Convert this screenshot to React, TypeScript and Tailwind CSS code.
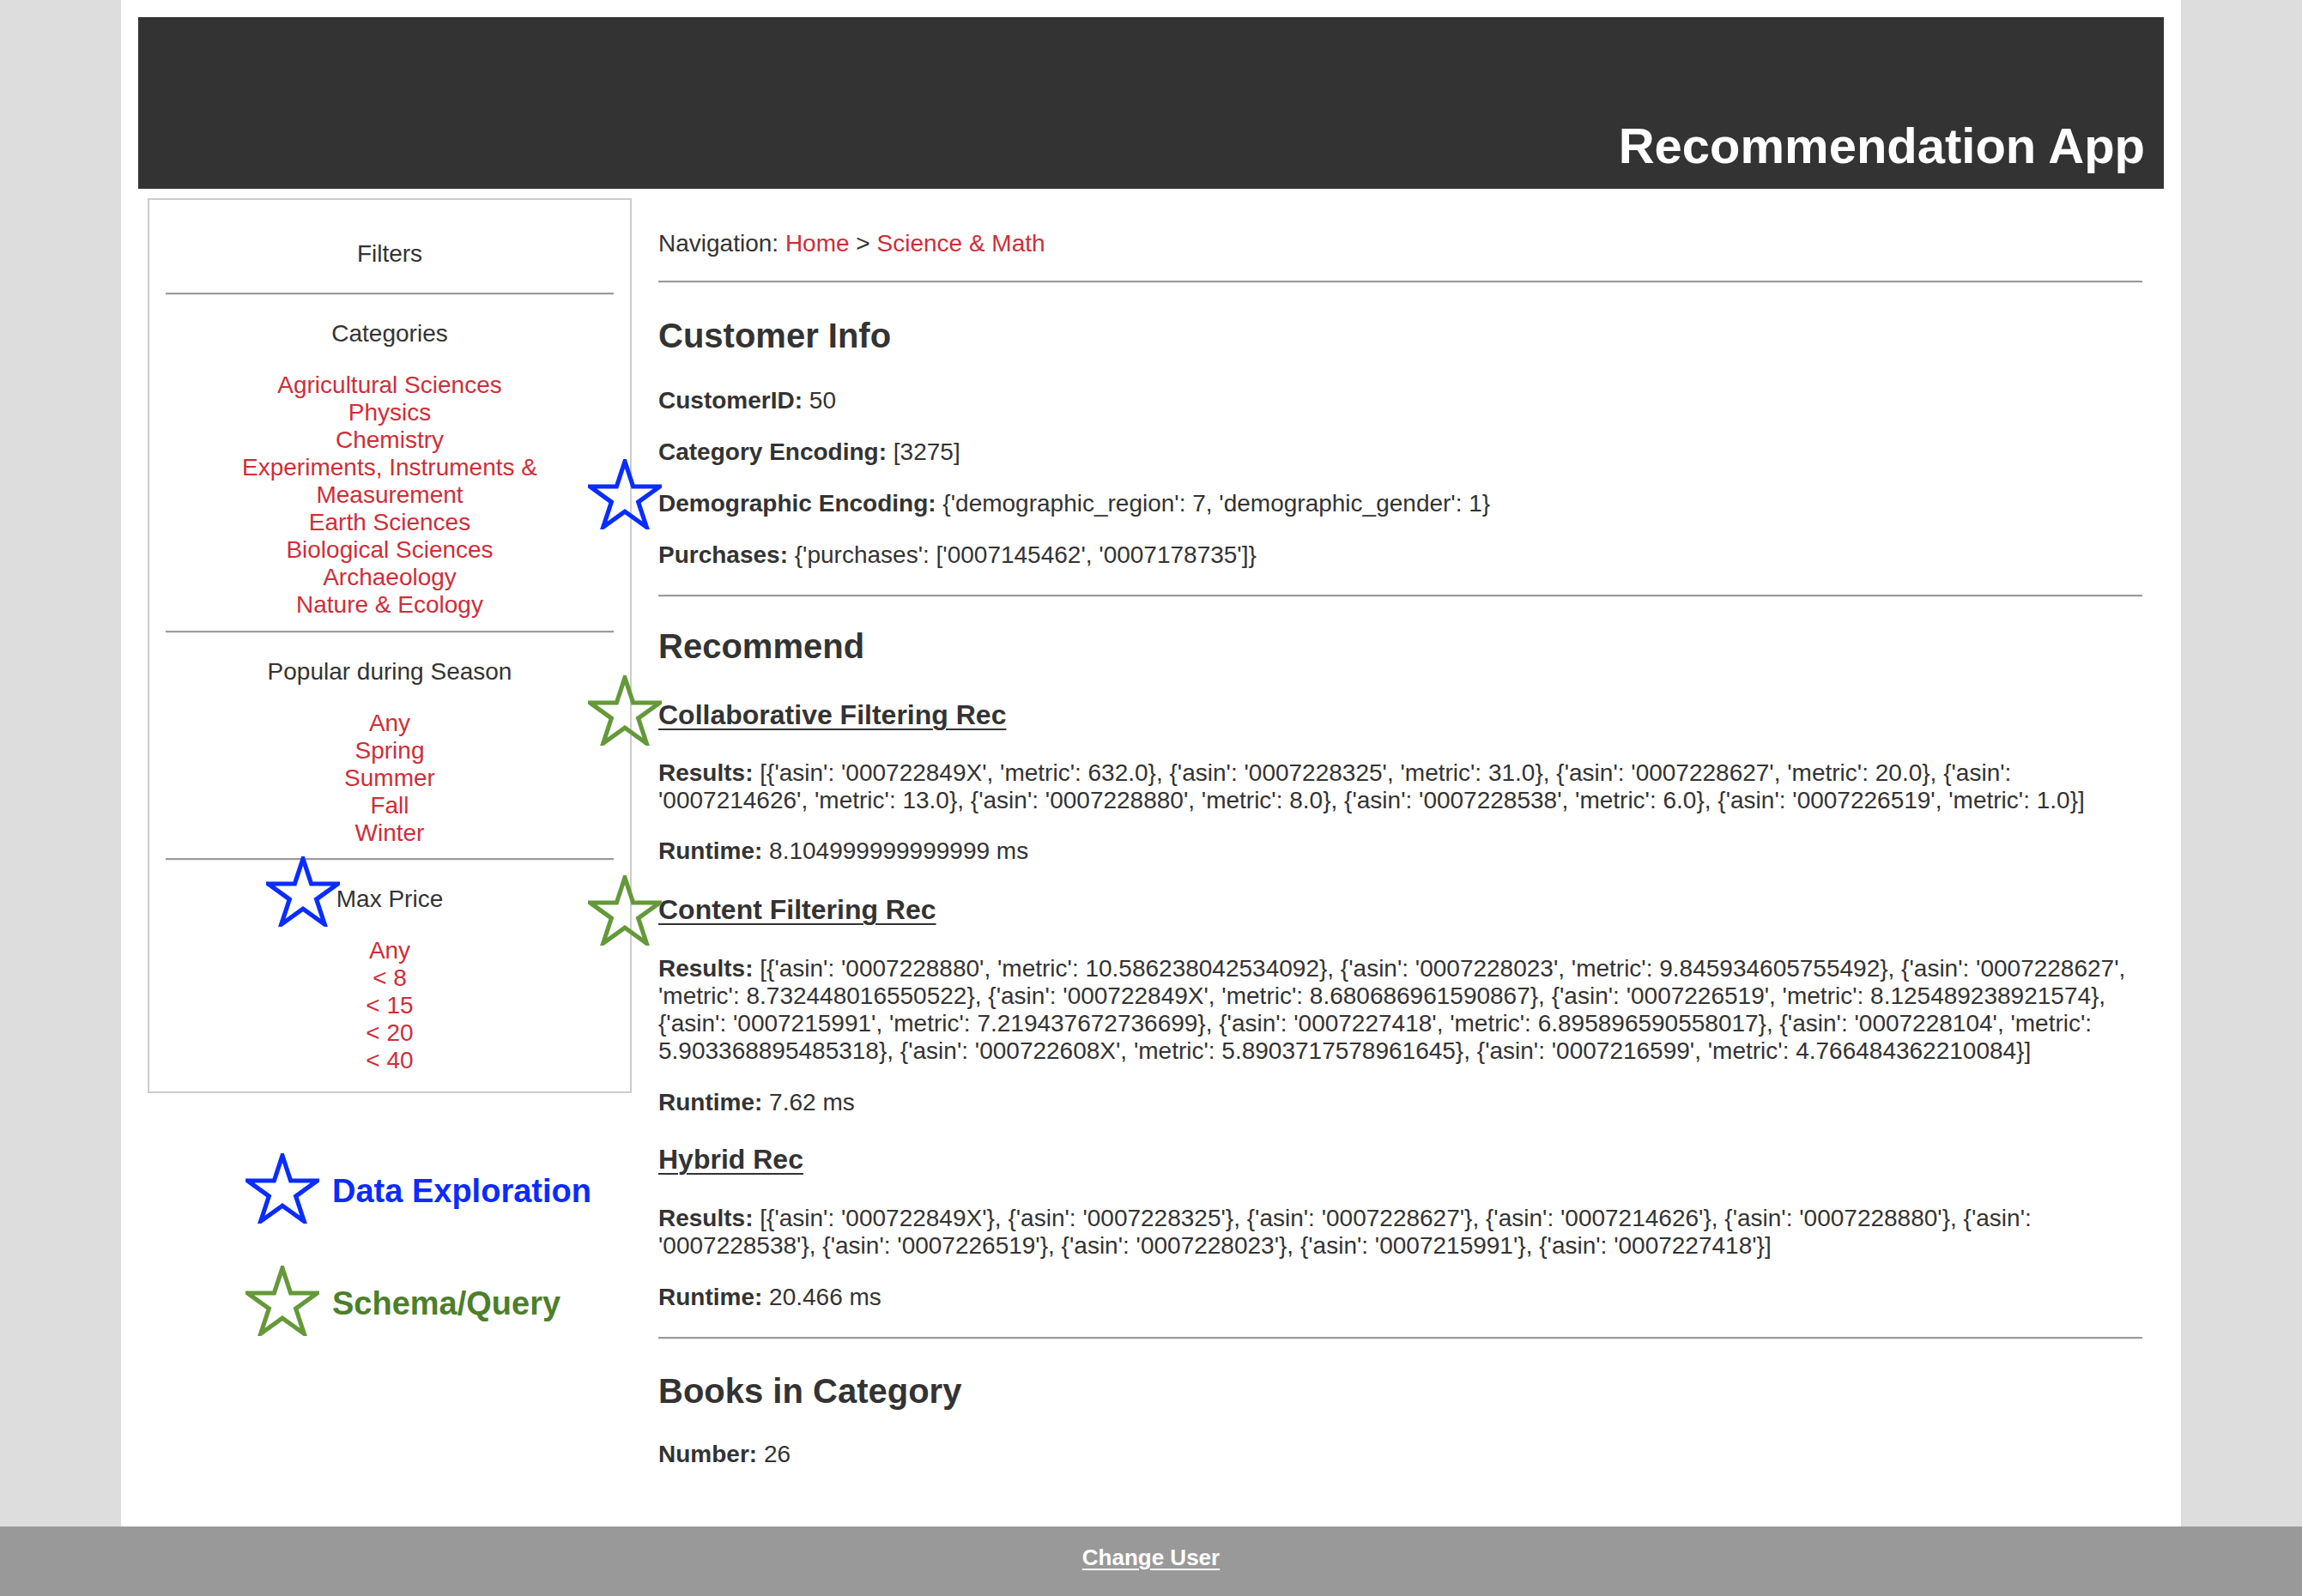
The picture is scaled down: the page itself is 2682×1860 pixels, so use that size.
import type { ReactNode } from 'react'

const categories = [
  'Agricultural Sciences',
  'Physics',
  'Chemistry',
  'Experiments, Instruments &|Measurement',
  'Earth Sciences',
  'Biological Sciences',
  'Archaeology',
  'Nature & Ecology',
]
const seasons = ['Any', 'Spring', 'Summer', 'Fall', 'Winter']
const prices = ['Any', '< 8', '< 15', '< 20', '< 40']

const collabLines = [
  "[{'asin': '000722849X', 'metric': 632.0}, {'asin': '0007228325', 'metric': 31.0}, {'asin': '0007228627', 'metric': 20.0}, {'asin':",
  "'0007214626', 'metric': 13.0}, {'asin': '0007228880', 'metric': 8.0}, {'asin': '0007228538', 'metric': 6.0}, {'asin': '0007226519', 'metric': 1.0}]",
]
const contentLines = [
  "[{'asin': '0007228880', 'metric': 10.586238042534092}, {'asin': '0007228023', 'metric': 9.845934605755492}, {'asin': '0007228627',",
  "'metric': 8.732448016550522}, {'asin': '000722849X', 'metric': 8.680686961590867}, {'asin': '0007226519', 'metric': 8.125489238921574},",
  "{'asin': '0007215991', 'metric': 7.219437672736699}, {'asin': '0007227418', 'metric': 6.895896590558017}, {'asin': '0007228104', 'metric':",
  "5.903368895485318}, {'asin': '000722608X', 'metric': 5.8903717578961645}, {'asin': '0007216599', 'metric': 4.766484362210084}]",
]
const hybridLines = [
  "[{'asin': '000722849X'}, {'asin': '0007228325'}, {'asin': '0007228627'}, {'asin': '0007214626'}, {'asin': '0007228880'}, {'asin':",
  "'0007228538'}, {'asin': '0007226519'}, {'asin': '0007228023'}, {'asin': '0007215991'}, {'asin': '0007227418'}]",
]

function Star({ color, className = '' }: { color: string; className?: string }) {
  return (
    <svg viewBox="0 0 100 95" className={`h-[82px] w-[86px] ${className}`}>
      <polygon
        points="50,3 61.2,37 97.5,37 68.2,58 79.4,92 50,71 20.6,92 31.8,58 2.5,37 38.8,37"
        fill="none"
        stroke={color}
        strokeWidth="6"
      />
    </svg>
  )
}

function Rule({ className = '' }: { className?: string }) {
  return <div className={`border-t-2 border-b border-t-[#9b9b9b] border-b-[#e8e8e8] ${className}`} />
}

function LinkList({ items, className = '' }: { items: string[]; className?: string }) {
  return (
    <ul className={className}>
      {items.map((item) => (
        <li key={item} className="text-[#cf2e38]">
          {item.split('|').map((part, i) => (
            <span key={i} className="block">
              {part}
            </span>
          ))}
        </li>
      ))}
    </ul>
  )
}

function Field({ label, children, className = '' }: { label: string; children: ReactNode; className?: string }) {
  return (
    <p className={className}>
      <span className="font-bold">{label}:</span> {children}
    </p>
  )
}

function Results({ lines, className = '' }: { lines: string[]; className?: string }) {
  return (
    <div className={`whitespace-nowrap ${className}`}>
      {lines.map((line, i) => (
        <p key={i}>
          {i === 0 && <span className="font-bold">Results: </span>}
          {line}
        </p>
      ))}
    </div>
  )
}

export default function App() {
  return (
    <div className="flex min-h-[1860px] flex-col bg-[#dddddd] font-['Liberation_Sans',Arial,sans-serif] text-[28px] leading-[32px] text-[#333333]">
      <div className="mx-auto flex w-[2400px] flex-1 flex-col bg-white px-[20px] pt-[20px]">
        <header className="flex h-[200px] items-end justify-end bg-[#333333] pb-[21px] pr-[22px]">
          <h1 className="text-[58px] font-bold leading-none text-white">Recommendation App</h1>
        </header>

        <div className="flex">
          <aside className="ml-[11px] mt-[11px] w-[564px] shrink-0">
            <div className="border-2 border-[#cccccc] px-[19px] pb-[20px] pt-[47px] text-center">
              <p>Filters</p>
              <Rule className="mt-[29px]" />
              <p className="mt-[29px]">Categories</p>
              <LinkList items={categories} className="mt-[28px]" />
              <Rule className="mt-[14px]" />
              <p className="mt-[29px]">Popular during Season</p>
              <LinkList items={seasons} className="mt-[28px]" />
              <Rule className="mt-[13px]" />
              <p className="mt-[29px]">
                <span className="relative inline-block">
                  <Star color="#0a2cff" className="absolute right-full top-[-34px] mr-[-4px]" />
                  Max Price
                </span>
              </p>
              <LinkList items={prices} className="mt-[28px]" />
            </div>

            <div className="mt-[70px] flex flex-col gap-[49px] pl-[114px] text-[38px] font-bold">
              <div className="flex items-center gap-[15px] text-[#0a2cff]">
                <Star color="#0a2cff" />
                <span className="pt-[6px]">Data Exploration</span>
              </div>
              <div className="flex items-center gap-[15px] text-[#4d7f2b]">
                <Star color="#64993a" />
                <span className="pt-[6px]">Schema/Query</span>
              </div>
            </div>
          </aside>

          <main className="flex-1 pb-[40px] pl-[31px] pr-[25px] pt-[48px]">
            <p>
              Navigation: <a className="text-[#cf2e38]">Home</a> &gt;{' '}
              <a className="text-[#cf2e38]">Science &amp; Math</a>
            </p>
            <Rule className="mt-[27px]" />

            <h2 className="mt-[37px] text-[40px] font-bold leading-[48px]">Customer Info</h2>
            <Field label="CustomerID" className="mt-[36px]">
              50
            </Field>
            <Field label="Category Encoding" className="mt-[28px]">
              [3275]
            </Field>
            <div className="relative mt-[28px]">
              <Star color="#0a2cff" className="absolute left-[-82px] top-[-36px]" />
              <Field label="Demographic Encoding">
                {"{'demographic_region': 7, 'demographic_gender': 1}"}
              </Field>
            </div>
            <Field label="Purchases" className="mt-[28px]">
              {"{'purchases': ['0007145462', '0007178735']}"}
            </Field>
            <Rule className="mt-[30px]" />

            <h2 className="mt-[33px] text-[40px] font-bold leading-[48px]">Recommend</h2>

            <h3 className="relative mt-[38px] text-[32px] font-bold leading-[36px]">
              <Star color="#64993a" className="absolute left-[-82px] top-[-28px]" />
              <span className="underline decoration-2 underline-offset-[5px]">Collaborative Filtering Rec</span>
            </h3>
            <Results lines={collabLines} className="mt-[34px]" />
            <Field label="Runtime" className="mt-[27px]">
              8.104999999999999 ms
            </Field>

            <h3 className="relative mt-[34px] text-[32px] font-bold leading-[36px]">
              <Star color="#64993a" className="absolute left-[-82px] top-[-22px]" />
              <span className="underline decoration-2 underline-offset-[5px]">Content Filtering Rec</span>
            </h3>
            <Results lines={contentLines} className="mt-[35px]" />
            <Field label="Runtime" className="mt-[28px]">
              7.62 ms
            </Field>

            <h3 className="mt-[32px] text-[32px] font-bold leading-[36px]">
              <span className="underline decoration-2 underline-offset-[5px]">Hybrid Rec</span>
            </h3>
            <Results lines={hybridLines} className="mt-[35px]" />
            <Field label="Runtime" className="mt-[28px]">
              20.466 ms
            </Field>
            <Rule className="mt-[30px]" />

            <h2 className="mt-[36px] text-[40px] font-bold leading-[48px]">Books in Category</h2>
            <Field label="Number" className="mt-[34px]">
              26
            </Field>
          </main>
        </div>
      </div>

      <footer className="flex h-[81px] items-center justify-center bg-[#999999] pb-[10px]">
        <a className="text-[26px] font-bold text-white underline decoration-2 underline-offset-[4px]">Change User</a>
      </footer>
    </div>
  )
}
